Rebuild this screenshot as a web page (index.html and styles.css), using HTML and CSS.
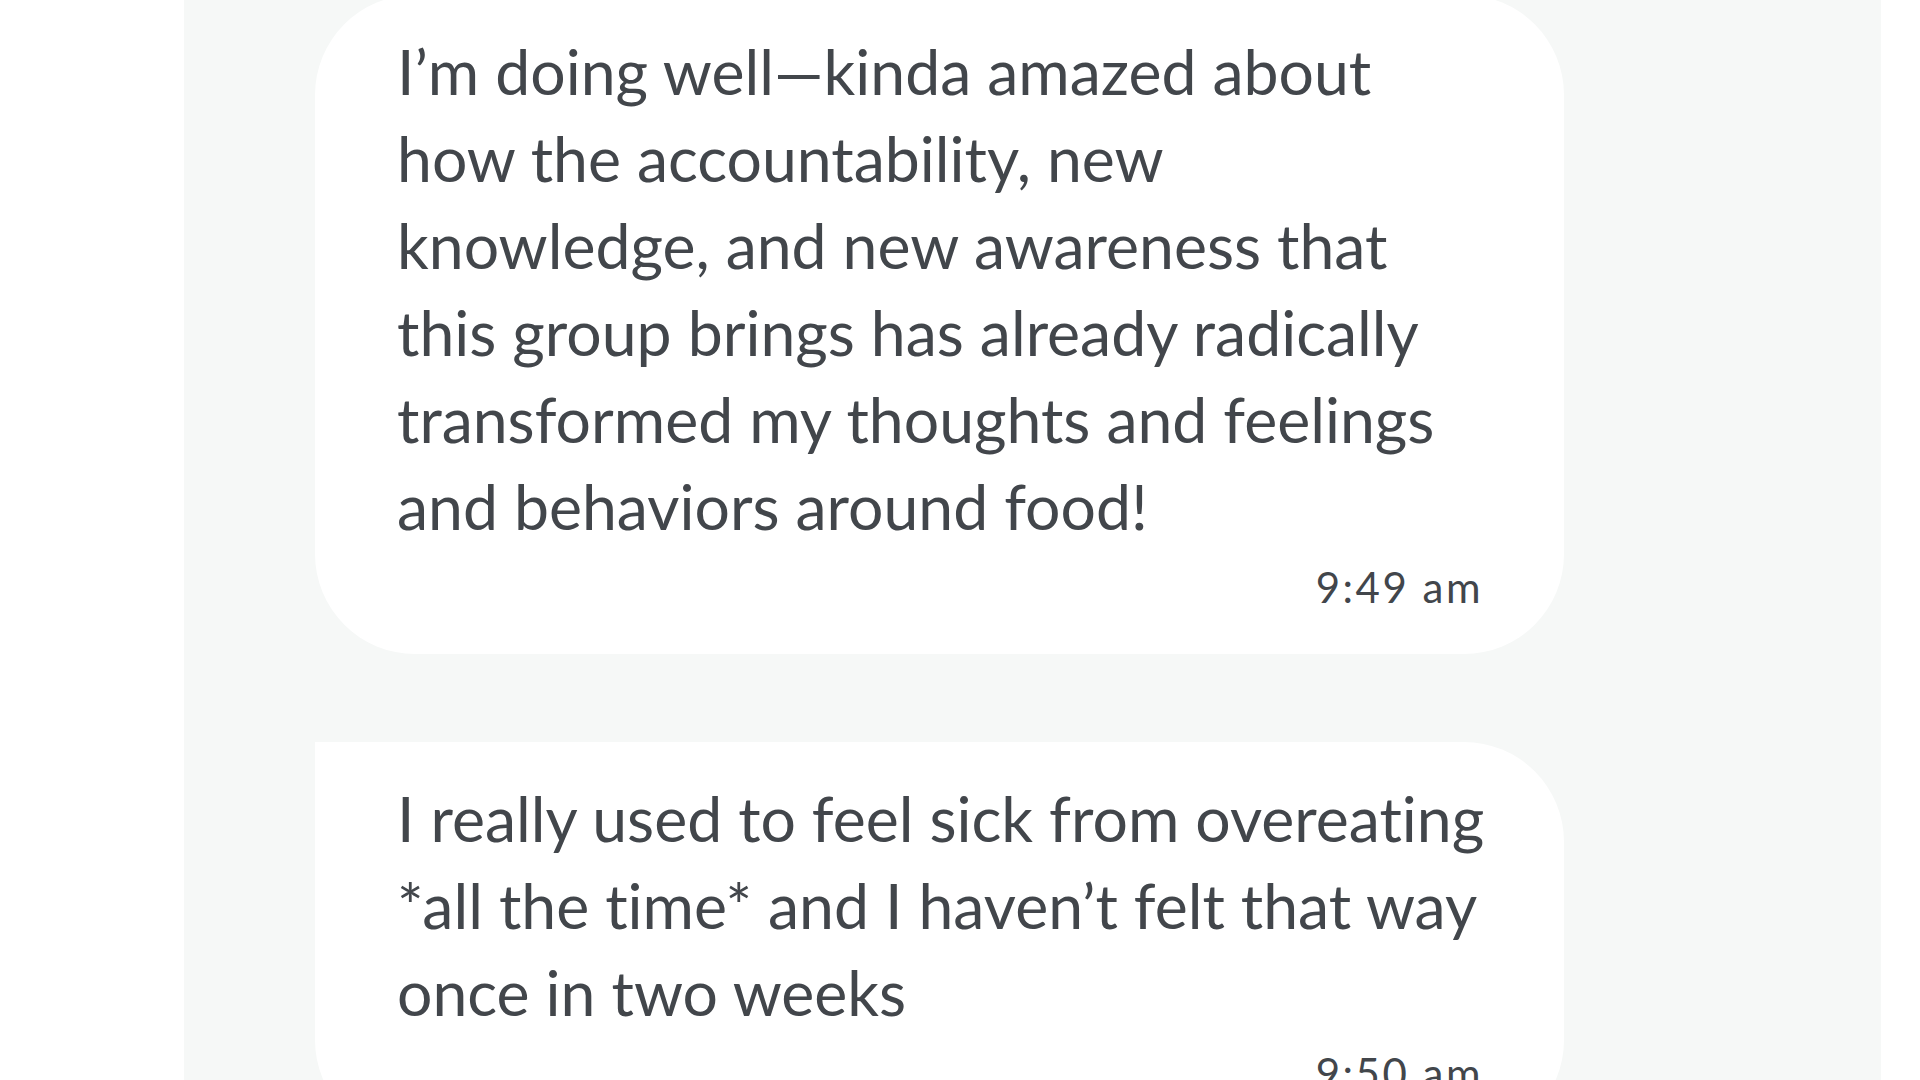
FILE: index.html
```html
<!DOCTYPE html>
<html lang="en">
<head>
<meta charset="utf-8">
<title>Chat</title>
<link rel="stylesheet" href="styles.css">
</head>
<body>
<div class="page">
  <main class="panel">
    <div class="thread">
      <div class="bubble bubble-first">
        <p class="text">I’m doing well—kinda amazed about<br>how the accountability, new<br>knowledge, and new awareness that<br>this group brings has already radically<br>transformed my thoughts and feelings<br>and behaviors around food!</p>
        <div class="time">9:49 am</div>
      </div>
      <div class="bubble bubble-next">
        <p class="text">I really used to feel sick from overeating<br>*all the time* and I haven’t felt that way<br>once in two weeks</p>
        <div class="time">9:50 am</div>
      </div>
    </div>
  </main>
</div>
</body>
</html>
```
FILE: styles.css
```css
html, body {
  margin: 0;
  padding: 0;
  height: 100%;
  overflow: hidden;
  background: #ffffff;
}

.page {
  display: flex;
  height: 100%;
}

.panel {
  margin-left: 184px;
  width: 1697px;
  background: #f6f8f7;
  padding-left: 131px;
  box-sizing: border-box;
}

.thread {
  display: flex;
  flex-direction: column;
  gap: 88px;
  margin-top: -5px;
  width: 1249px;
}

.bubble {
  background: #ffffff;
  border-radius: 100px;
  padding: 32px 78px 42px 82px;
  color: #42464b;
  font-family: Lato, "Noto Sans", sans-serif;
}

.bubble-next {
  border-top-left-radius: 0;
}

.text {
  margin: 0;
  font-size: 62.5px;
  line-height: 87px;
  font-variant-ligatures: none;
  white-space: nowrap;
}

.time {
  margin-top: 13px;
  margin-right: 3px;
  text-align: right;
  font-size: 42px;
  line-height: 50px;
  letter-spacing: 2.5px;
}
```
